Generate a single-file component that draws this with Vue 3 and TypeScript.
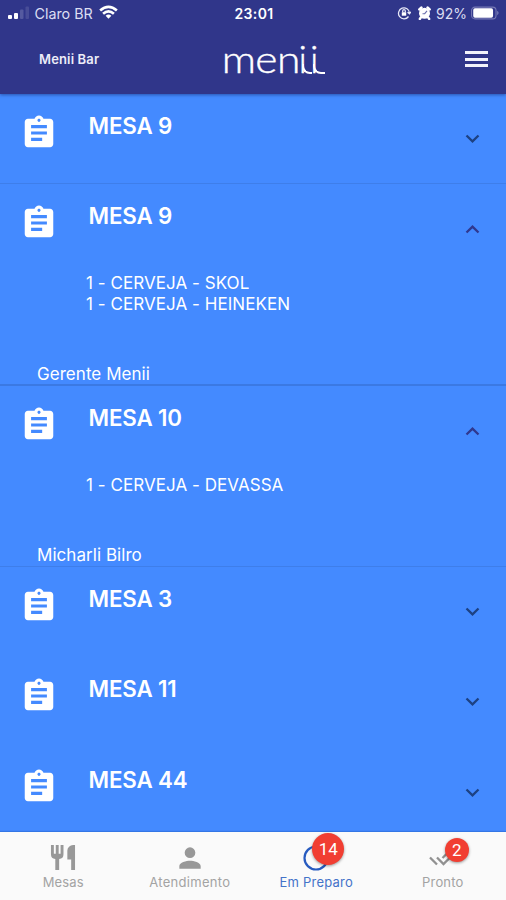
<script setup lang="ts">
interface Order {
  table: string
  open: boolean
  items: string[]
  waiter?: string
  size: string
}

const orders: Order[] = [
  { table: 'MESA 9', open: false, items: [], size: 'closed lined' },
  { table: 'MESA 9', open: true, items: ['1 - CERVEJA - SKOL', '1 - CERVEJA - HEINEKEN'], waiter: 'Gerente Menii', size: 'tall lined strong' },
  { table: 'MESA 10', open: true, items: ['1 - CERVEJA - DEVASSA'], waiter: 'Micharli Bilro', size: 'medium lined' },
  { table: 'MESA 3', open: false, items: [], size: 'closed' },
  { table: 'MESA 11', open: false, items: [], size: 'closed' },
  { table: 'MESA 44', open: false, items: [], size: 'closed' },
]
</script>

<template>
  <div class="screen">
    <header class="header">
      <div class="status">
        <div class="carrier">
          <svg class="signal" width="21" height="14" viewBox="0 0 21 14">
            <rect x="0" y="9" width="4" height="4" rx="1" fill="#fff" />
            <rect x="6" y="7" width="4" height="6" rx="1" fill="#fff" />
            <rect x="12" y="3.5" width="3.5" height="9.5" rx="1" fill="#555aa0" />
            <rect x="17.5" y="0.5" width="3.5" height="12.5" rx="1" fill="#484d98" />
          </svg>
          <span class="carrier-name">Claro BR</span>
          <svg class="wifi" width="19" height="15" viewBox="0 0 20 15" fill="none" stroke="#fff" stroke-width="2.8">
            <path d="M1.2 5.3Q10-2.3 18.8 5.3" />
            <path d="M4.3 8.8Q10 3.8 15.7 8.8" />
            <path d="M7 10.8Q10 8.6 13 10.8L10 14Z" fill="#fff" stroke="none" />
          </svg>
        </div>
        <div class="clock">23:01</div>
        <div class="indicators">
          <svg width="14" height="14" viewBox="0 0 14 14" fill="none" stroke="#e6e7f6" stroke-width="1.3">
            <path d="M11.500 10.500A5.500 5.500 0 1 1 12.500 7M10.500 6.300l2 1.500 1.400-2" />
            <rect x="4.8" y="6.2" width="4.4" height="3.500" fill="#fff" stroke="none" />
            <path d="M5.700 6V5a1.300 1.300 0 0 1 2.600 0v1" />
          </svg>
          <svg class="alarm" width="13" height="14" viewBox="0 0 13 14">
            <circle cx="6.5" cy="7.3" r="5.5" fill="#fff" />
            <path d="M1.300 3.500 3.500 1.500M11.700 3.500 9.500 1.500M2.800 11.500l-1 1.500M10.200 11.500l1 1.500" stroke="#fff" stroke-width="2.400" stroke-linecap="round" />
            <path d="M9 4.800 6.700 7.700H4.500" fill="none" stroke="#6c70ae" stroke-width="1.1" />
          </svg>
          <span class="percent">92%</span>
          <svg class="battery" width="29" height="14" viewBox="0 0 30 14">
            <rect x="0.6" y="0.9" width="25.3" height="12.2" rx="3.5" fill="none" stroke="#777ab5" stroke-width="1.1" />
            <rect x="2.3" y="2" width="20.5" height="10" rx="1.8" fill="#fff" />
            <path d="M27.3 4.7Q29.5 7 27.3 9.3Z" fill="#9093c4" />
          </svg>
        </div>
      </div>
      <div class="toolbar">
        <span class="place">Menii Bar</span>
        <div class="logo"><span class="stem">men</span><span class="tail">i</span><span class="tail last">i</span></div>
        <div class="menu"><i></i><i></i><i></i></div>
      </div>
    </header>

    <main class="orders">
      <section v-for="(order, i) in orders" :key="i" :class="['order', order.size]">
        <div class="order-head">
          <svg class="clipboard" viewBox="0 0 24 24" fill="#fff">
            <path fill-rule="evenodd" d="M19 3h-4.180C14.400 1.840 13.300 1 12 1S9.600 1.840 9.180 3H5c-1.100 0-2 .9-2 2v14c0 1.100.9 2 2 2h14c1.100 0 2-.9 2-2V5c0-1.100-.9-2-2-2zm-7 0c.55 0 1 .45 1 1s-.45 1-1 1-1-.45-1-1 .45-1 1-1zm2 14H7v-2h7v2zm3-4H7v-2h10v2zm0-4H7V7h10v2z" />
          </svg>
          <h2>{{ order.table }}</h2>
          <svg :class="['chevron', { up: order.open }]" width="15" height="10" viewBox="0 0 15 10">
            <path d="M1.500 1.500 7.500 7.300l6-5.800" fill="none" stroke="currentColor" stroke-width="2.300" />
          </svg>
        </div>
        <div v-if="order.open" class="details">
          <div class="items"><p v-for="item in order.items" :key="item">{{ item }}</p></div>
          <p class="waiter">{{ order.waiter }}</p>
        </div>
      </section>
    </main>

    <nav class="tabs">
      <div class="tab">
        <div class="tab-icon">
          <svg width="26" height="27" viewBox="0 0 27 28" fill="#989898">
            <path d="M1 1h3v9h2V1h3v9h2V1h3v9.500a5 5 0 0 1-4.500 5V27h-4V15.500A5 5 0 0 1 1 10.500Z" />
            <path d="M26 1v26h-4V16h-4V7a6 6 0 0 1 6-6Z" />
          </svg>
        </div>
        <span class="label">Mesas</span>
      </div>
      <div class="tab">
        <div class="tab-icon">
          <svg width="32" height="32" viewBox="0 0 24 24" fill="#989898">
            <path d="M12 12a4 4 0 1 0 0-8 4 4 0 0 0 0 8zm0 2c-2.670 0-8 1.340-8 4v2h16v-2c0-2.660-5.330-4-8-4z" />
          </svg>
        </div>
        <span class="label wide">Atendimento</span>
      </div>
      <div class="tab active">
        <div class="tab-icon">
          <svg width="26" height="26" viewBox="0 0 26 26"><circle cx="13" cy="13" r="11.500" fill="none" stroke="#275bc0" stroke-width="2.200" /></svg>
          <b class="badge big">14</b>
        </div>
        <span class="label">Em Preparo</span>
      </div>
      <div class="tab">
        <div class="tab-icon">
          <svg class="checks" width="30" height="20" viewBox="0 0 30 20" fill="none" stroke="#919191" stroke-width="2.300">
            <path d="M2 9.500l7 7M9 9.500l6.500 6.500L29 2.500M14.500 10 22 2.500" />
          </svg>
          <b class="badge">2</b>
        </div>
        <span class="label">Pronto</span>
      </div>
    </nav>
  </div>
</template>

<style>
body { margin: 0; overflow: hidden; }
</style>

<style scoped>
* { box-sizing: border-box; }
.screen { width: 506px; height: 900px; display: flex; flex-direction: column; font-family: Inter, "Liberation Sans", sans-serif; background: #448aff; color: #fff; overflow: hidden; }
svg { display: block; flex: none; }
.header { height: 93.5px; flex: none; background: #30368a; box-shadow: 0 1px 3px rgba(20, 40, 110, .55); z-index: 1; }
.status { height: 26px; display: grid; grid-template-columns: 1fr 60px 1fr; align-items: center; padding: 0 6px 0 8px; }
.carrier { display: flex; align-items: center; }
.carrier-name { font-size: 14.300px; margin-left: 5.500px; width: 60px; white-space: nowrap; color: #dcdef2; }
.wifi { margin-left: 4px; margin-top: -1px; }
.clock { text-align: center; font-size: 14px; font-weight: 600; letter-spacing: .4px; }
.indicators { display: flex; align-items: center; justify-content: flex-end; }
.alarm { margin-left: 7px; }
.percent { font-size: 14px; margin-left: 5px; width: 31px; color: #dcdef2; }
.battery { margin-left: 4px; }
.toolbar { height: 67px; display: grid; grid-template-columns: 223px 1fr 24px; padding: 0 17px 0 0; }
.place { padding: 25px 0 0 39px; font-size: 13px; line-height: 17px; font-weight: 600; letter-spacing: .15px; color: #ececf8; }
.logo { display: flex; font-family: Lato, sans-serif; font-size: 38px; line-height: 46px; padding-top: 9px; font-weight: 300; white-space: nowrap; -webkit-text-stroke: .4px #fff; }
.stem { width: 75.5px; letter-spacing: -.5px; transform: scaleX(1.12); transform-origin: 3px 50%; margin-left: -1.500px; margin-right: 1.500px; }
.tail { position: relative; width: 11.500px; height: 46px; }
.tail::after { content: ""; position: absolute; left: 3.200px; top: 29px; width: 8px; height: 8px; border-left: 2.200px solid #fff; border-bottom: 2.200px solid #fff; border-bottom-left-radius: 8px; }
.tail.last::after { width: 10px; }
.menu { display: flex; flex-direction: column; gap: 3.500px; padding-top: 25px; }
.menu i { height: 3px; width: 23px; background: #f2f2fb; }
.orders { height: 738px; flex: none; overflow: hidden; }
.order { position: relative; }
.closed { height: 90.5px; }
.tall { height: 202px; }
.medium { height: 180.5px; }
.lined { border-bottom: 1px solid #3e7eea; }
.strong { border-bottom: 2px solid #3b79e3; }
.order-head { height: 90px; display: flex; align-items: flex-start; padding: 0 26px 0 19.500px; }
.clipboard { width: 38px; height: 38px; margin-top: 20px; }
h2 { flex: 1; margin: 18px 0 0 31px; font-size: 22.300px; line-height: 28px; font-weight: 600; letter-spacing: -.15px; }
.chevron { margin-top: 40px; color: #1d4182; }
.chevron.up { transform: rotate(180deg); color: #30388f; }
p { margin: 0; white-space: nowrap; }
.items { padding-left: 86px; margin-top: -1px; font-size: 17px; line-height: 20.500px; letter-spacing: .05px; }
.details { height: 110px; display: flex; flex-direction: column; justify-content: space-between; }
.medium .details { height: 89px; }
.waiter { padding-left: 37px; font-size: 17px; line-height: 20px; letter-spacing: .05px; }
.tabs { height: 68.500px; flex: none; background: #fafafa; display: grid; grid-template-columns: repeat(4, 1fr); box-shadow: 0 -1px 1px rgba(20, 80, 180, .35); z-index: 1; }
.tab { display: flex; flex-direction: column; align-items: center; color: #a3a3a3; }
.tab-icon { height: 42px; padding-top: 10px; display: flex; align-items: center; position: relative; }
.label { font-size: 13px; line-height: 17px; letter-spacing: .15px; }
.wide { letter-spacing: .3px; }
.active { color: #4473c9; }
.active .label { letter-spacing: .2px; }
.badge { position: absolute; left: 17px; top: 6px; width: 24px; height: 24px; border-radius: 50%; background: #f13e32; color: #fff; display: grid; place-items: center; font-family: Roboto, sans-serif; font-size: 17px; font-weight: 400; box-shadow: 0 1px 3px rgba(0, 0, 0, .4); }
.badge.big { left: 9px; top: 1px; width: 32px; height: 32px; }
</style>
